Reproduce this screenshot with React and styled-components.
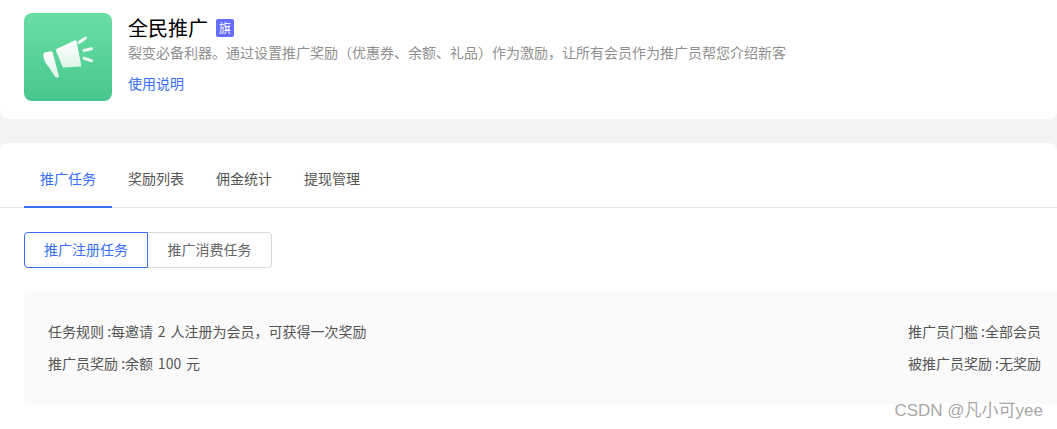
import React from 'react';
import styled, { createGlobalStyle } from 'styled-components';

const GlobalStyle = createGlobalStyle`
  html, body {
    margin: 0;
    padding: 0;
    background: #f2f3f5;
    overflow: hidden;
  }
  body {
    font-family: "Noto Sans CJK SC", "Liberation Sans", sans-serif;
  }
`;

const Page = styled.div`
  position: relative;
  width: 1057px;
  height: 429px;
  overflow: hidden;
`;

const Header = styled.header`
  display: flex;
  gap: 16px;
  height: 119px;
  padding: 13px 24px 0;
  box-sizing: border-box;
  background: #fff;
  border-radius: 0 0 8px 8px;
`;

const Logo = styled.div`
  display: flex;
  align-items: center;
  justify-content: center;
  width: 88px;
  height: 88px;
  border-radius: 8px;
  background: linear-gradient(180deg, #69dea4 0%, #47c78d 100%);
`;

const Info = styled.div`
  display: flex;
  flex-direction: column;
  align-items: flex-start;
`;

const TitleRow = styled.div`
  display: flex;
  align-items: center;
  gap: 8px;
  height: 30px;
`;

const Title = styled.h1`
  margin: 0;
  font-size: 20px;
  font-weight: 400;
  line-height: 30px;
  color: #000;
`;

const Badge = styled.span`
  display: flex;
  align-items: center;
  justify-content: center;
  width: 18px;
  height: 18px;
  border-radius: 2px;
  background: #666cff;
  color: #fff;
  font-size: 12px;
  line-height: 18px;
`;

const Description = styled.p`
  margin: -1px 0 0;
  font-size: 14px;
  line-height: 20px;
  color: #8f8f8f;
`;

const HelpLink = styled.a`
  margin-top: 11px;
  font-size: 14px;
  line-height: 20px;
  color: #3a6ff8;
`;

const Card = styled.section`
  margin-top: 24px;
  height: 286px;
  background: #fff;
  border-radius: 8px 8px 0 0;
`;

const Tabs = styled.nav`
  display: flex;
  height: 65px;
  padding-left: 24px;
  box-sizing: border-box;
  border-bottom: 1px solid #e5e6eb;
`;

const Tab = styled.div`
  width: 88px;
  height: 65px;
  box-sizing: border-box;
  text-align: center;
  font-size: 14px;
  line-height: 70px;
  color: ${(p) => (p.$active ? '#3a6ff8' : '#555')};
  border-bottom: 2px solid ${(p) => (p.$active ? '#3a6ff8' : 'transparent')};
`;

const Segments = styled.div`
  display: flex;
  margin: 24px 0 0 24px;
`;

const Segment = styled.button`
  width: 124px;
  height: 36px;
  padding: 0 0 2px;
  box-sizing: border-box;
  background: #fff;
  font-family: inherit;
  font-size: 14px;
  line-height: 32px;
  color: ${(p) => (p.$active ? '#3a6ff8' : '#666')};
  border: 1px solid ${(p) => (p.$active ? '#3a6ff8' : '#d9d9d9')};
  border-left-width: ${(p) => (p.$active ? '1px' : '0')};
  border-radius: ${(p) => (p.$active ? '4px 0 0 4px' : '0 4px 4px 0')};
`;

const Panel = styled.div`
  display: flex;
  justify-content: space-between;
  height: 112px;
  margin: 24px 0 0 24px;
  padding: 29px 16px 0 24px;
  box-sizing: border-box;
  background: #fafafa;
  border-radius: 4px 0 0 4px;
`;

const Column = styled.div`
  display: flex;
  flex-direction: column;
  gap: 12px;
  align-items: ${(p) => (p.$right ? 'flex-end' : 'flex-start')};
`;

const Rule = styled.div`
  font-size: 14px;
  line-height: 20px;
  color: #555;
`;

const Num = styled.span`
  margin: 0 1.7px;
`;

const Watermark = styled.div`
  position: absolute;
  right: 14px;
  bottom: 7px;
  font-family: "Liberation Sans", "Noto Sans CJK SC", sans-serif;
  font-size: 17px;
  line-height: 22px;
  color: #a8a8a8;
`;

const MegaphoneIcon = () => (
  <svg width="56" height="48" viewBox="0 0 56 48">
    <defs>
      <linearGradient id="horn" x1="0" y1="0" x2="0" y2="1">
        <stop offset="0" stopColor="#ffffff" />
        <stop offset="1" stopColor="#dff5ea" />
      </linearGradient>
    </defs>
    <g fill="url(#horn)" stroke="url(#horn)" strokeWidth="2" strokeLinejoin="round">
      <path d="M5 20.600L11.500 19.200L18 43.200C17.500 44 16.500 44 16 43.200L8.900 32.500C6.500 30 4.500 26 4.200 21.800z" />
      <path d="M16.800 17L35.500 8.200L40.300 32.600L23.500 33.500z" />
    </g>
    <g stroke="#e9f8f0" strokeWidth="3" strokeLinecap="round" fill="none">
      <path d="M39 9.500L45.500 5" />
      <path d="M44 17.500L51.500 15.800" />
      <path d="M44 25.300L51.500 27.700" />
    </g>
  </svg>
);

const tabs = ['推广任务', '奖励列表', '佣金统计', '提现管理'];

const App = () => (
  <Page>
    <GlobalStyle />
    <Header>
      <Logo>
        <MegaphoneIcon />
      </Logo>
      <Info>
        <TitleRow>
          <Title>全民推广</Title>
          <Badge>旗</Badge>
        </TitleRow>
        <Description>
          裂变必备利器。通过设置推广奖励（优惠券、余额、礼品）作为激励，让所有会员作为推广员帮您介绍新客
        </Description>
        <HelpLink>使用说明</HelpLink>
      </Info>
    </Header>
    <Card>
      <Tabs>
        {tabs.map((name, i) => (
          <Tab key={name} $active={i === 0}>
            {name}
          </Tab>
        ))}
      </Tabs>
      <Segments>
        <Segment $active>推广注册任务</Segment>
        <Segment>推广消费任务</Segment>
      </Segments>
      <Panel>
        <Column>
          <Rule>
            任务规则 :每邀请 <Num>2</Num> 人注册为会员，可获得一次奖励
          </Rule>
          <Rule>
            推广员奖励 :余额 <Num>100</Num> 元
          </Rule>
        </Column>
        <Column $right>
          <Rule>推广员门槛 :全部会员</Rule>
          <Rule>被推广员奖励 :无奖励</Rule>
        </Column>
      </Panel>
    </Card>
    <Watermark>CSDN @凡小可yee</Watermark>
  </Page>
);

export default App;
